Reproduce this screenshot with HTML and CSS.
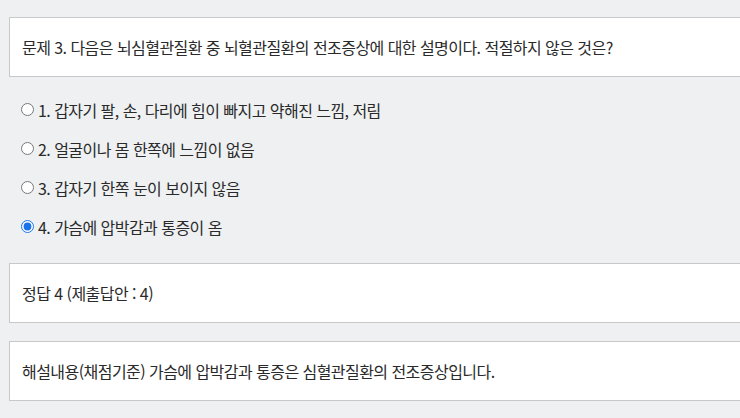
FILE: index.html
```html
<!DOCTYPE html>
<html lang="ko">
<head>
<meta charset="utf-8">
<link rel="stylesheet" href="styles.css">
</head>
<body>
<div class="page">
  <div class="box">문제 3. 다음은 뇌심혈관질환 중 뇌혈관질환의 전조증상에 대한 설명이다. 적절하지 않은 것은?</div>
  <ul class="options">
    <li class="option"><input type="radio" name="q3" class="radio"><span>1. 갑자기 팔, 손, 다리에 힘이 빠지고 약해진 느낌, 저림</span></li>
    <li class="option"><input type="radio" name="q3" class="radio"><span>2. 얼굴이나 몸 한쪽에 느낌이 없음</span></li>
    <li class="option"><input type="radio" name="q3" class="radio"><span>3. 갑자기 한쪽 눈이 보이지 않음</span></li>
    <li class="option"><input type="radio" name="q3" class="radio" checked><span>4. 가슴에 압박감과 통증이 옴</span></li>
  </ul>
  <div class="box answer">정답 4 (제출답안 : 4)</div>
  <div class="box explain">해설내용(채점기준) 가슴에 압박감과 통증은 심혈관질환의 전조증상입니다.</div>
</div>
</body>
</html>
```

FILE: styles.css
```css
html, body {
  margin: 0;
  padding: 0;
  background: #eef0f2;
}
.page {
  padding: 17px 0 0 9px;
  font-family: "Noto Sans CJK KR", "Noto Sans", sans-serif;
  font-size: 16px;
  letter-spacing: -0.55px;
  color: #2a2a2a;
}
.box {
  background: #fff;
  border: 1px solid #c6c8ca;
  border-right: none;
  height: 58px;
  display: flex;
  align-items: center;
  padding-left: 12px;
  box-sizing: content-box;
}
.options {
  list-style: none;
  margin: 13px 0 0 0;
  padding: 0 0 0 12px;
}
.option {
  height: 39px;
  display: flex;
  align-items: center;
}
.radio {
  width: 13px;
  height: 13px;
  margin: 0 4px 0 0;
  accent-color: #1a73e8;
}
.answer {
  margin-top: 17px;
}
.explain {
  margin-top: 18px;
}
```
